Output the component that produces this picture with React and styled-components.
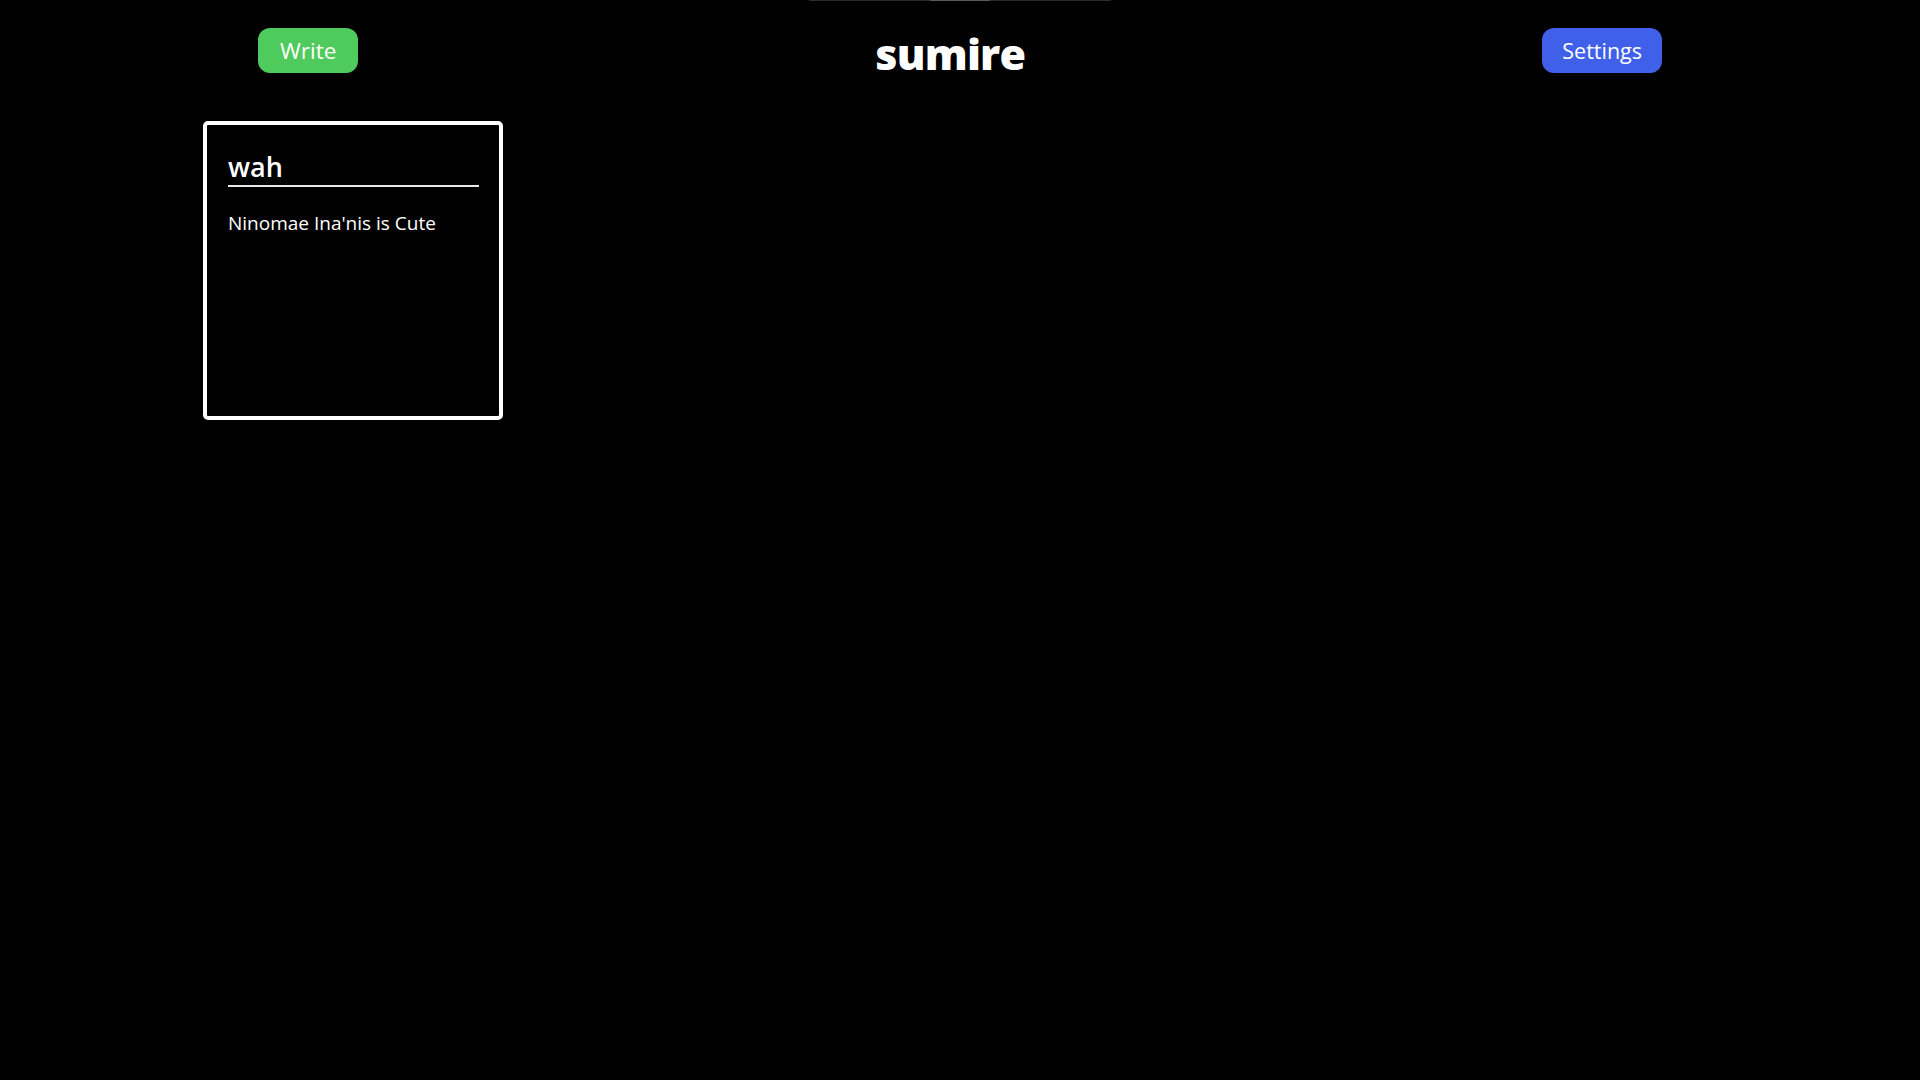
import React from 'react';
import styled, { createGlobalStyle } from 'styled-components';

const GlobalStyle = createGlobalStyle`
	html, body {
		margin: 0;
		padding: 0;
		background: #000;
		color: #fff;
		font-family: 'Open Sans', 'Noto Sans', sans-serif;
	}
	#root {
		min-height: 100vh;
		background: #000;
	}
`;

const Page = styled.div`
	min-height: 1080px;
	background: #000;
`;

const TopRule = styled.div`
	width: 302px;
	height: 1px;
	margin: 0 auto;
	background: #2a2a2a;
	display: flex;
	justify-content: center;
`;

const TopThumb = styled.div`
	width: 60px;
	height: 1px;
	background: #5a5a5a;
`;

const Header = styled.header`
	display: flex;
	justify-content: space-between;
	align-items: center;
	padding: 27px 258px 0;
	height: 45px;
`;

const Button = styled.button`
	height: 45px;
	padding: 1px ${({ pad }) => pad}px 0;
	border: none;
	border-radius: 12px;
	background: ${({ color }) => color};
	color: #fff;
	font-family: 'Open Sans', 'Noto Sans', sans-serif;
	font-size: ${({ size }) => size}px;
	line-height: 44px;
	cursor: pointer;
`;

const Logo = styled.h1`
	margin: 0;
	padding-top: 5px;
	font-family: 'Open Sans', 'Noto Sans', sans-serif;
	font-weight: 800;
	font-size: 43px;
	letter-spacing: -0.8px;
	line-height: 45px;
	color: #fff;
`;

const Grid = styled.main`
	display: grid;
	grid-template-columns: repeat(auto-fill, 300px);
	gap: 24px;
	padding: 48px 203px 0;
`;

const Card = styled.article`
	box-sizing: border-box;
	width: 300px;
	height: 299px;
	border: 4px solid #fff;
	border-radius: 5px;
	padding: 20px 20px 20px 21px;
	background: #000;
`;

const Title = styled.h2`
	margin: 0;
	padding-top: 3px;
	border-bottom: 2px solid #e8e8e8;
	font-size: 27px;
	font-weight: 600;
	line-height: 37px;
`;

const Body = styled.p`
	margin: 24px 0 0;
	font-size: 19px;
	line-height: 24px;
`;

const notes = [{ id: 1, title: 'wah', body: "Ninomae Ina'nis is Cute" }];

const App = () => (
	<Page>
		<GlobalStyle />
		<TopRule>
			<TopThumb />
		</TopRule>
		<Header>
			<Button color="#4ecb5c" pad={22} size={22.5}>
				Write
			</Button>
			<Logo>sumire</Logo>
			<Button color="#4060ea" pad={20} size={21.5}>
				Settings
			</Button>
		</Header>
		<Grid>
			{notes.map((note) => (
				<Card key={note.id}>
					<Title>{note.title}</Title>
					<Body>{note.body}</Body>
				</Card>
			))}
		</Grid>
	</Page>
);

export default App;
